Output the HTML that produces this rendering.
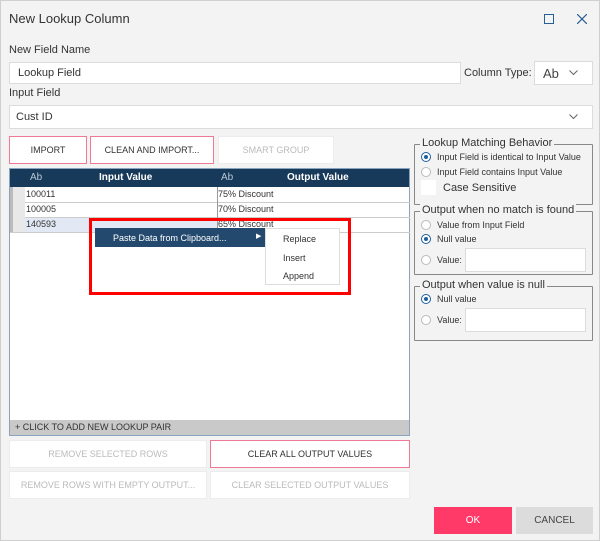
<!DOCTYPE html>
<html><head><style>
*{box-sizing:border-box;margin:0;padding:0}
body{width:600px;height:541px;background:#f3f3f3;font-family:"Liberation Sans",sans-serif;color:#333;position:relative;overflow:hidden;border:1px solid #cfcfcf}
.a{position:absolute}
.t{font-size:10px;white-space:nowrap}
.in{background:#fff;border:1px solid #dcdcdc}
.btn{position:absolute;border:1px solid #ececec;background:#fff;font-size:9px;display:flex;align-items:center;justify-content:center;color:#bbb}
.pk{border:1px solid #f07a95;color:#333}
.grp{position:absolute;border:1px solid #888;border-radius:1px}
.lg{position:absolute;top:-8px;left:5px;background:#f3f3f3;font-size:11px;padding:0 2px;color:#333}
.rd{position:absolute;width:10px;height:10px;border:1px solid #bbb;border-radius:50%;background:#fff}
.rd.on::after{content:"";position:absolute;left:2px;top:2px;width:4px;height:4px;border-radius:50%;background:#1f5f9e}
.rd.on{border-color:#1f5f9e}
.rt{position:absolute;font-size:9px;color:#333}
</style></head><body>
<div class="a" style="left:8px;top:10px;font-size:13px;color:#333">New Lookup Column</div>
<div class="a" style="left:543px;top:13px;width:10px;height:10px;border:1.3px solid #2a5f94"></div>
<svg class="a" style="left:576px;top:13px" width="10" height="10"><path d="M0 0L10 10M10 0L0 10" stroke="#2a5f94" stroke-width="1.2"/></svg>
<div class="a t" style="left:8px;top:43px;font-size:11px">New Field Name</div>
<div class="a in" style="left:8px;top:61px;width:452px;height:22px"></div>
<div class="a t" style="left:17px;top:66px;font-size:11px">Lookup Field</div>
<div class="a t" style="left:463px;top:66px;font-size:11px">Column Type:</div>
<div class="a in" style="left:533px;top:60px;width:59px;height:24px"></div>
<div class="a t" style="left:542px;top:65px;font-size:13px;color:#444">Ab</div>
<svg class="a" style="left:568px;top:69px" width="9" height="6"><path d="M0.5 0.5L4.5 4.5L8.5 0.5" stroke="#666" fill="none"/></svg>
<div class="a t" style="left:8px;top:86px;font-size:11px">Input Field</div>
<div class="a in" style="left:8px;top:104px;width:584px;height:24px"></div>
<div class="a t" style="left:15px;top:110px;font-size:11px">Cust ID</div>
<svg class="a" style="left:568px;top:113px" width="9" height="6"><path d="M0.5 0.5L4.5 4.5L8.5 0.5" stroke="#666" fill="none"/></svg>
<div class="btn pk" style="left:8px;top:135px;width:78px;height:28px">IMPORT</div>
<div class="btn pk" style="left:89px;top:135px;width:124px;height:28px">CLEAN AND IMPORT...</div>
<div class="btn" style="left:217px;top:135px;width:116px;height:28px">SMART GROUP</div>
<div class="a" style="left:8px;top:167px;width:401px;height:268px;background:#fff;border:1px solid #8aa4c0"></div>
<div class="a" style="left:9px;top:168px;width:399px;height:18px;background:#183a5a"></div>
<div class="a t" style="left:29px;top:171px;color:#b8c6d4">Ab</div>
<div class="a t" style="left:98px;top:171px;color:#fff;font-weight:bold">Input Value</div>
<div class="a t" style="left:220px;top:171px;color:#b8c6d4">Ab</div>
<div class="a t" style="left:286px;top:171px;color:#fff;font-weight:bold">Output Value</div>
<div class="a" style="left:9px;top:186px;width:15px;height:46px;background:#e8e8e8;border-left:3px solid #bbb"></div>
<div class="a" style="left:24px;top:201px;width:385px;height:1px;background:#ccc"></div>
<div class="a" style="left:24px;top:216px;width:385px;height:1px;background:#ccc"></div>
<div class="a" style="left:9px;top:231px;width:400px;height:1px;background:#ccc"></div>
<div class="a" style="left:24px;top:217px;width:192px;height:14px;background:#e2e9f4"></div>
<div class="a" style="left:216px;top:186px;width:1px;height:45px;background:#999"></div>
<div class="a t" style="left:25px;top:188px;font-size:9px">100011</div>
<div class="a t" style="left:25px;top:203px;font-size:9px">100005</div>
<div class="a t" style="left:25px;top:218px;font-size:9px">140593</div>
<div class="a t" style="left:217px;top:188px;font-size:9px">75% Discount</div>
<div class="a t" style="left:217px;top:203px;font-size:9px">70% Discount</div>
<div class="a t" style="left:217px;top:218px;font-size:9px">65% Discount</div>
<div class="a" style="left:88px;top:217px;width:262px;height:77px;border:3px solid #f00"></div>
<div class="a" style="left:94px;top:227px;width:170px;height:19px;background:#234a6e"></div>
<div class="a t" style="left:112px;top:232px;font-size:9px;color:#fff">Paste Data from Clipboard...</div>
<div class="a t" style="left:255px;top:231px;font-size:7px;color:#fff">▶</div>
<div class="a" style="left:264px;top:227px;width:75px;height:57px;background:#fff;border:1px solid #ddd"></div>
<div class="a t" style="left:282px;top:233px;font-size:9px">Replace</div>
<div class="a t" style="left:282px;top:252px;font-size:9px">Insert</div>
<div class="a t" style="left:282px;top:270px;font-size:9px">Append</div>
<div class="a" style="left:9px;top:419px;width:399px;height:15px;background:#c9c9c9"></div>
<div class="a t" style="left:14px;top:421px;font-size:9px;color:#333">+ CLICK TO ADD NEW LOOKUP PAIR</div>
<div class="btn" style="left:8px;top:439px;width:198px;height:28px">REMOVE SELECTED ROWS</div>
<div class="btn pk" style="left:209px;top:439px;width:200px;height:28px">CLEAR ALL OUTPUT VALUES</div>
<div class="btn" style="left:8px;top:470px;width:198px;height:28px">REMOVE ROWS WITH EMPTY OUTPUT...</div>
<div class="btn" style="left:209px;top:470px;width:200px;height:28px">CLEAR SELECTED OUTPUT VALUES</div>
<div class="btn" style="left:433px;top:506px;width:78px;height:27px;background:#ff3a69;border:none;color:#fff;font-size:10px">OK</div>
<div class="btn" style="left:515px;top:506px;width:77px;height:27px;background:#dcdcdc;border:none;color:#444;font-size:10px">CANCEL</div>
<div class="grp" style="left:413px;top:143px;width:179px;height:61px"><div class="lg">Lookup Matching Behavior</div></div>
<div class="rd on" style="left:420px;top:151px"></div><div class="rt" style="left:436px;top:151px">Input Field is identical to Input Value</div>
<div class="rd" style="left:420px;top:166px"></div><div class="rt" style="left:436px;top:166px">Input Field contains Input Value</div>
<div class="a" style="left:420px;top:179px;width:15px;height:15px;background:#fff"></div>
<div class="rt" style="left:442px;top:181px;font-size:11px">Case Sensitive</div>
<div class="grp" style="left:413px;top:210px;width:179px;height:64px"><div class="lg">Output when no match is found</div></div>
<div class="rd" style="left:420px;top:219px"></div><div class="rt" style="left:436px;top:219px">Value from Input Field</div>
<div class="rd on" style="left:420px;top:233px"></div><div class="rt" style="left:436px;top:233px">Null value</div>
<div class="rd" style="left:420px;top:254px"></div><div class="rt" style="left:436px;top:254px">Value:</div>
<div class="a in" style="left:464px;top:247px;width:121px;height:24px"></div>
<div class="grp" style="left:413px;top:285px;width:179px;height:55px"><div class="lg">Output when value is null</div></div>
<div class="rd on" style="left:420px;top:293px"></div><div class="rt" style="left:436px;top:293px">Null value</div>
<div class="rd" style="left:420px;top:314px"></div><div class="rt" style="left:436px;top:314px">Value:</div>
<div class="a in" style="left:464px;top:307px;width:121px;height:24px"></div>
</body></html>
